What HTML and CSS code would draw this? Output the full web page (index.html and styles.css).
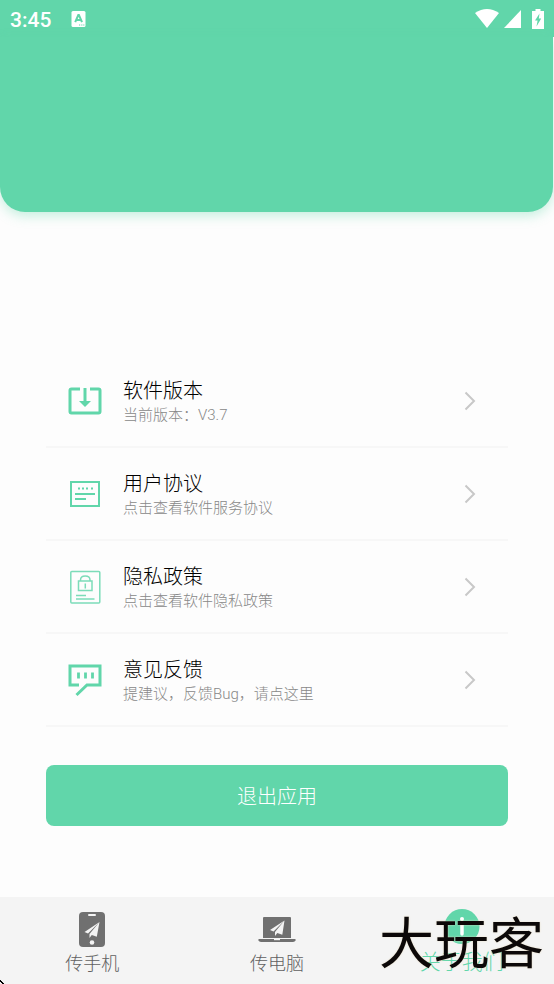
FILE: index.html
```html
<!DOCTYPE html>
<html lang="zh-CN">

<head>
    <meta charset="utf-8" />
    <meta name="viewport" content="width=device-width, initial-scale=1" />
    <title>关于我们</title>
    <link rel="stylesheet" href="styles.css">
</head>

<body>
    <header>
        <div class="status-bar">
            <span class="status-time">3:45</span>
            <svg class="status-app" width="15" height="16" viewBox="0 0 15 16">
                <rect x="0.5" y="0" width="14" height="16" rx="1.5" fill="#fff" />
                <path d="M4.2 11.200L7.300 4h.6l3.100 7.200M5.400 9h4.400" fill="none" stroke="#61d6aa" stroke-width="2" />
                <path d="M8 14h1.2M10.2 14h1.2M12.2 14h1.2" stroke="#61d6aa" stroke-width="1.2" />
            </svg>
            <div class="status-icons">
                <svg width="24" height="19" viewBox="0 0 24 19">
                    <path d="M0 4Q12-4 24 4L12 19z" fill="#fff" />
                </svg>
                <svg width="17" height="18" viewBox="0 0 17 18">
                    <path d="M17 0v18H0z" fill="#fff" />
                </svg>
                <svg class="status-battery" width="12" height="20" viewBox="0 0 12 20">
                    <path d="M3.500 0h5v2H12v18H0V2h3.500z" fill="#fff" />
                    <path d="M7.500 4.500L3 11.500h2.600L4.500 17.500L9.200 9.500H6.800z" fill="#61d6aa" />
                </svg>
            </div>
        </div>
        <div class="banner"></div>
    </header>

    <main>
        <nav class="menu">
            <a class="menu-item" href="#version">
                <svg class="menu-icon" width="36" height="36" viewBox="0 0 36 36">
                    <path d="M13 6H4.500Q3 6 3 7.500V28.500Q3 30 4.500 30H31.500Q33 30 33 28.500V7.500Q33 6 31.500 6H23" fill="none" stroke="#61d6aa" stroke-width="3" />
                    <path d="M18 5v14" stroke="#61d6aa" stroke-width="3" />
                    <path d="M12 18h12l-6 6z" fill="#61d6aa" />
                </svg>
                <span class="menu-text">
                    <span class="menu-title">软件版本</span>
                    <span class="menu-note">当前版本：V3.7</span>
                </span>
                <svg class="menu-arrow" width="12" height="20" viewBox="0 0 12 20">
                    <path d="M1.500 1.500L10 10l-8.500 8.500" />
                </svg>
            </a>
            <a class="menu-item" href="#agreement">
                <svg class="menu-icon" width="36" height="36" viewBox="0 0 36 36">
                    <g fill="none" stroke="#61d6aa" stroke-width="2">
                        <rect x="4" y="6" width="28" height="24" />
                        <path d="M8 18h20M8 23h11" stroke-width="1.800" />
                        <path d="M11 12.500h2M15 12.500h2M19 12.500h2M24 12.500h2" stroke-width="1.800" />
                    </g>
                </svg>
                <span class="menu-text">
                    <span class="menu-title">用户协议</span>
                    <span class="menu-note">点击查看软件服务协议</span>
                </span>
                <svg class="menu-arrow" width="12" height="20" viewBox="0 0 12 20">
                    <path d="M1.500 1.500L10 10l-8.500 8.500" />
                </svg>
            </a>
            <a class="menu-item" href="#privacy">
                <svg class="menu-icon" width="36" height="36" viewBox="0 0 36 36">
                    <g fill="none" stroke="#7cdcb9" stroke-width="1.500">
                        <rect x="3.800" y="2.500" width="29" height="31.500" rx="1" />
                        <rect x="11.500" y="12" width="13.500" height="9.500" />
                        <path d="M13.500 12v-1q0-4 4.750-4t4.750 4v1M18.300 14.500v5M9 26.500h10M9 30h18.500" />
                    </g>
                </svg>
                <span class="menu-text">
                    <span class="menu-title">隐私政策</span>
                    <span class="menu-note">点击查看软件隐私政策</span>
                </span>
                <svg class="menu-arrow" width="12" height="20" viewBox="0 0 12 20">
                    <path d="M1.500 1.500L10 10l-8.500 8.500" />
                </svg>
            </a>
            <a class="menu-item" href="#feedback">
                <svg class="menu-icon" width="36" height="36" viewBox="0 0 36 36">
                    <g fill="none" stroke="#61d6aa" stroke-width="3">
                        <path d="M12 23H3V4H33V23H20L9.500 33" />
                        <path d="M11.500 10.500v6M18.500 10.500v6M25.500 10.500v6" stroke-width="2.800" />
                    </g>
                </svg>
                <span class="menu-text">
                    <span class="menu-title">意见反馈</span>
                    <span class="menu-note">提建议，反馈Bug，请点这里</span>
                </span>
                <svg class="menu-arrow" width="12" height="20" viewBox="0 0 12 20">
                    <path d="M1.500 1.500L10 10l-8.500 8.500" />
                </svg>
            </a>
        </nav>
        <button class="exit-button" type="button">退出应用</button>
    </main>

    <footer>
        <nav class="tab-bar">
            <a class="tab" href="#phone">
                <svg width="26" height="36" viewBox="0 0 26 36">
                    <rect x="0" y="0" width="26" height="35" rx="4" fill="#707070" />
                    <rect x="9" y="2" width="8" height="2" rx="1" fill="#f4f4f4" />
                    <path d="M20.500 10L5.500 20l3.500 1.500zM20.500 10L10.500 22v4l2.300-3 5 1.800z" fill="#f4f4f4" />
                    <circle cx="13" cy="30.500" r="2.300" fill="#f4f4f4" />
                </svg>
                <span>传手机</span>
            </a>
            <a class="tab" href="#computer">
                <svg width="38" height="36" viewBox="0 0 38 36">
                    <path d="M6 5h26q1 0 1 1v20H5V6q0-1 1-1z" fill="#707070" />
                    <path d="M0.500 27h37v1.500q-1 1.500-3 1.500h-31q-2 0-3-1.500z" fill="#707070" />
                    <path d="M16 27h6v1.200h-6z" fill="#f4f4f4" />
                    <path d="M26.500 8.500L12 18l3.500 1.500zM26.500 8.500L17 20v4l2.300-3 5 1.800z" fill="#f4f4f4" />
                </svg>
                <span>传电脑</span>
            </a>
            <a class="tab tab-active" href="#about">
                <svg width="36" height="36" viewBox="0 0 36 36">
                    <circle cx="18" cy="17.500" r="17.500" fill="#61d6aa" />
                    <circle cx="18" cy="10" r="2" fill="#fff" />
                    <path d="M18 16v9" stroke="#fff" stroke-width="3.500" stroke-linecap="round" />
                </svg>
                <span>关于我们</span>
            </a>
        </nav>
        <div class="watermark">大玩客</div>
        <svg class="corner-mark" width="4" height="4" viewBox="0 0 4 4">
            <path d="M0 0h1v1h1v1h1v1h1v1H2V3H1V2H0z" fill="#000" />
        </svg>
    </footer>
</body>

</html>
```
FILE: styles.css
```css
* {
    box-sizing: border-box;
}

body {
    display: flex;
    flex-direction: column;
    min-height: 100vh;
    margin: 0;
    background-color: #fdfdfd;
    font-family: Roboto, "Noto Sans CJK SC", sans-serif;
    font-weight: 300;
}

a {
    color: inherit;
    text-decoration: none;
}

svg {
    display: block;
    flex: none;
}

.status-bar {
    display: flex;
    align-items: center;
    height: 37px;
    padding: 0 10px;
    background-color: #61d6aa;
}

.status-time {
    color: #fff;
    font-size: 21px;
    font-weight: 500;
    line-height: 24px;
    padding-top: 2px;
}

.status-app {
    margin-left: 20px;
}

.status-icons {
    display: flex;
    align-items: center;
    gap: 5px;
    margin-left: auto;
}

.status-battery {
    margin-left: 6px;
}

.banner {
    height: 175px;
    margin-right: 1px;
    background-color: #61d6aa;
    border-radius: 0 0 25px 25px;
    box-shadow: 0 4px 12px rgba(97, 214, 170, 0.35);
}

main {
    flex: 1;
    padding: 143px 46px 40px;
}

.menu-item {
    display: flex;
    align-items: center;
    height: 93px;
    padding: 0 32px 0 21px;
    border-bottom: 2px solid #f7f7f7;
}

.menu-text {
    flex: 1;
    margin-left: 20px;
    padding-top: 3px;
}

.menu-title,
.menu-note {
    display: block;
}

.menu-title {
    color: #000;
    font-size: 20px;
    line-height: 26px;
}

.menu-note {
    color: #888;
    font-size: 15px;
    line-height: 22px;
}

.menu-arrow path {
    fill: none;
    stroke: #c8c8c8;
    stroke-width: 2;
}

.exit-button {
    display: block;
    width: 100%;
    height: 61px;
    margin-top: 38px;
    border: none;
    border-radius: 8px;
    background-color: #61d6aa;
    color: #fff;
    font-family: inherit;
    font-size: 20px;
    font-weight: inherit;
}

footer {
    position: relative;
}

.tab-bar {
    display: flex;
    height: 87px;
    background-color: #f4f4f4;
}

.tab {
    display: flex;
    flex: 1;
    flex-direction: column;
    align-items: center;
    padding-top: 15px;
    color: #606060;
    font-size: 18px;
    line-height: 32px;
}

.tab-active {
    padding-top: 12px;
    color: #61d6aa;
    font-size: 21px;
    line-height: 34px;
}

/* site mark lies over the last tab */
.watermark {
    position: absolute;
    right: 10px;
    bottom: 10px;
    color: #0c0808;
    font-size: 55px;
    font-weight: 400;
    line-height: 60px;
    text-shadow: 0 0 2px #e8dcc0;
    pointer-events: none;
}

.corner-mark {
    position: absolute;
    left: 0;
    bottom: 0;
}
```
